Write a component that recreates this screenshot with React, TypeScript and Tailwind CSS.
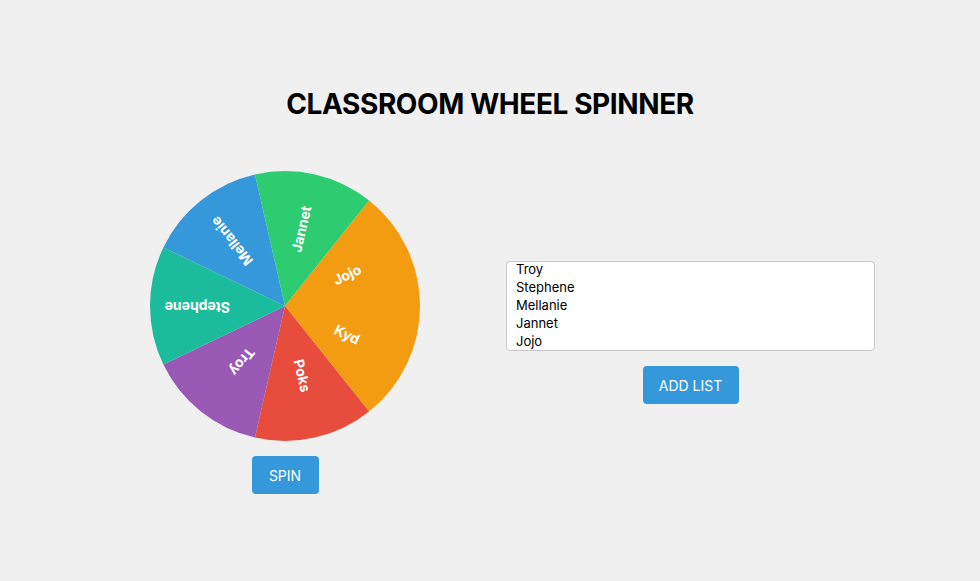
import React from 'react';

const names = ['Troy', 'Stephene', 'Mellanie', 'Jannet', 'Jojo', 'Kyd', 'Poks'];
const colors = ['#9b59b6', '#1abc9c', '#3498db', '#2ecc71', '#f39c12', '#f39c12', '#e74c3c'];
const START = 102.857;

const Wheel = () => {
  const arc = 360 / names.length;
  const r = 135;
  const pt = (deg: number) => {
    const a = (deg * Math.PI) / 180;
    return [150 + r * Math.cos(a), 150 + r * Math.sin(a)];
  };
  return (
    <svg width="300" height="300" viewBox="0 0 300 300">
      {names.map((name, i) => {
        const s = START + i * arc;
        const [x1, y1] = pt(s);
        const [x2, y2] = pt(s + arc);
        return (
          <path key={name} d={`M150 150 L${x1} ${y1} A${r} ${r} 0 0 1 ${x2} ${y2} Z`} fill={colors[i]} />
        );
      })}
      {names.map((name, i) => (
        <text
          key={name + '-t'}
          transform={`translate(150 150) rotate(${START + i * arc + arc / 2})`}
          x={55}
          y={0}
          dominantBaseline="middle"
          fill="#fff"
          fontSize="14"
          fontWeight="700"
          fontFamily="Inter, 'Noto Sans', sans-serif"
        >
          {name}
        </text>
      ))}
    </svg>
  );
};

export default function App() {
  // only the first five rows are visible in the list box
  const visible = names.slice(0, 5);
  return (
    <div className="min-h-[581px] w-full bg-[#f0f0f0] font-['Inter','Noto_Sans',sans-serif] text-black">
      <h1 className="pt-[86px] text-center text-[28px] font-bold leading-[36px] tracking-[-0.4px]">CLASSROOM WHEEL SPINNER</h1>
      <div className="mt-[34px] flex pl-[135px]">
        <div className="flex w-[300px] flex-col items-center">
          <Wheel />
          <button className="h-[38px] w-[67px] rounded-[4px] bg-[#3498db] text-[14px] text-white">SPIN</button>
        </div>
        <div className="ml-[71px] mt-[105px] flex w-[369px] flex-col items-center">
          <div className="h-[90px] w-full overflow-hidden rounded-[4px] border border-[#c8c8c8] bg-white px-[9px] text-[13px] leading-[18px]">
            <div className="-mt-[2px]">
              {visible.map((n) => (
                <div key={n}>{n}</div>
              ))}
            </div>
          </div>
          <button className="mt-[15px] h-[38px] w-[96px] rounded-[4px] bg-[#3498db] text-[14px] text-white">ADD LIST</button>
        </div>
      </div>
    </div>
  );
}
